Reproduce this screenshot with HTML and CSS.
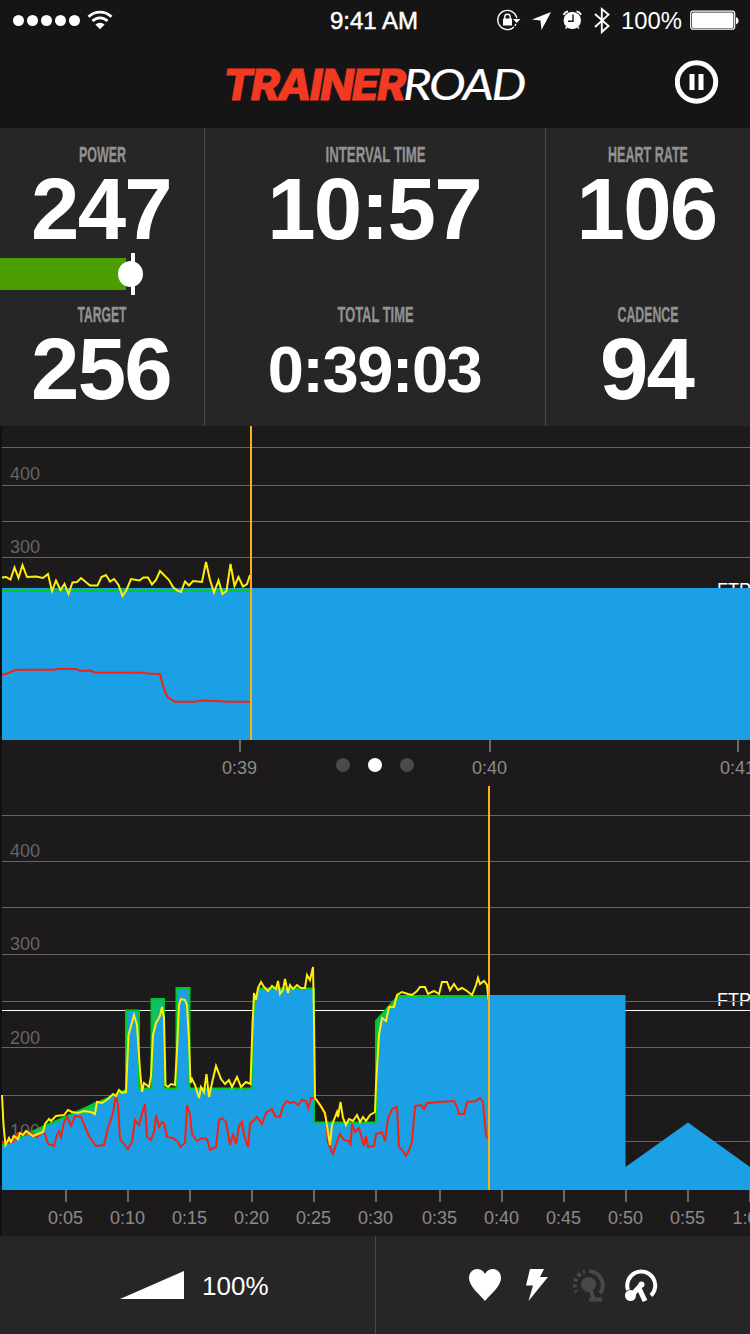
FILE: index.html
```html
<!DOCTYPE html>
<html lang="en">
<head>
    <meta charset="UTF-8">
    <meta name="viewport" content="width=device-width, initial-scale=1.0">
    <title>TrainerRoad</title>
    <link rel="stylesheet" href="styles.css">
</head>

<body>
    <div class="app">
        <header class="header">
            <div class="statusbar">
                <div class="status-left">
                    <span class="signal"></span><span class="signal"></span><span class="signal"></span><span class="signal"></span><span class="signal"></span>
                    <svg class="wifi" width="26" height="20" viewBox="0 0 26 20">
                        <path d="M1.5 6.8a16.3 16.3 0 0 1 23 0M5.5 11a10.6 10.6 0 0 1 15 0" fill="none" stroke="#fff" stroke-width="2.7"/>
                        <path d="M8.4 14.6a6.5 6.5 0 0 1 9.2 0L13 19.2z" fill="#fff"/>
                    </svg>
                </div>
                <svg class="clock" width="100" height="40" viewBox="0 0 100 40">
                    <text x="5" y="29" textLength="88" lengthAdjust="spacingAndGlyphs">9:41 AM</text>
                </svg>
                <svg class="status-icons" width="254" height="40" viewBox="496 0 254 40">
                    <!-- rotation lock -->
                    <path d="M514 27A9.6 9.6 0 1 1 516.8 18" fill="none" stroke="#fff" stroke-width="1.4"/>
                    <path d="M516 24l-1.2 2" fill="none" stroke="#fff" stroke-width="1.4"/>
                    <path d="M513 19h7.5l-3.8 4zM503 18.5h9v7h-9z" fill="#fff"/>
                    <path d="M504.8 19v-2a2.7 2.7 0 0 1 5.4 0v2" fill="none" stroke="#fff" stroke-width="1.4"/>
                    <!-- location -->
                    <path d="M551 12l-9.5 18-1-9.5-8.5-.9z" fill="#fff"/>
                    <!-- alarm -->
                    <circle cx="572.3" cy="20.4" r="8.7" fill="#fff"/>
                    <path d="M563.6 15a5.5 5.5 0 0 1 4.5-3.6M581 15a5.5 5.5 0 0 0-4.5-3.6M567 27l-1.5 1.5M577.5 27l1.5 1.5" fill="none" stroke="#fff" stroke-width="1.6"/>
                    <path d="M573 14.5v6.8h-5" fill="none" stroke="#151515" stroke-width="1.4"/>
                    <!-- bluetooth -->
                    <path d="M595 14l13.5 12-6.7 6V9l6.7 5.6L595 27" fill="none" stroke="#fff" stroke-width="1.9"/>
                    <text x="621" y="29" textLength="61" lengthAdjust="spacingAndGlyphs">100%</text>
                    <!-- battery -->
                    <rect x="690.7" y="11.2" width="44" height="18" rx="2.5" fill="none" stroke="#fff" stroke-width="1.2"/>
                    <rect x="692" y="12.5" width="41.4" height="15.4" rx="1.5" fill="#fff"/>
                    <path d="M736 17a4 4 0 0 1 0 7.5z" fill="#fff"/>
                </svg>
            </div>
            <div class="navbar">
                <svg class="logo" width="310" height="60" viewBox="220 52 310 60">
                    <text class="logo-trainer" x="223" y="99.5" textLength="181" lengthAdjust="spacingAndGlyphs">TRAINER</text>
                    <text class="logo-road" x="403" y="99.5" textLength="121" lengthAdjust="spacingAndGlyphs">ROAD</text>
                </svg>
                <svg class="pause" width="44" height="44" viewBox="0 0 44 44">
                    <circle cx="21.5" cy="22" r="19.2" fill="none" stroke="#fff" stroke-width="5"/>
                    <path d="M14.5 14h5v16h-5zM23.5 14h5v16h-5z" fill="#fff"/>
                </svg>
            </div>
        </header>

        <section class="stats">
            <div class="stat-column">
                <div class="stat">
                    <svg class="label" width="180" height="27"><text x="66" y="21" textLength="47" lengthAdjust="spacingAndGlyphs">POWER</text></svg>
                    <div class="value">247</div>
                </div>
                <div class="power-bar">
                    <div class="power-fill"></div>
                    <div class="power-mark"></div>
                    <div class="power-knob"></div>
                </div>
                <div class="stat">
                    <svg class="label" width="180" height="27"><text x="64.5" y="21" textLength="49" lengthAdjust="spacingAndGlyphs">TARGET</text></svg>
                    <div class="value">256</div>
                </div>
            </div>
            <div class="stat-column">
                <div class="stat">
                    <svg class="label" width="300" height="27"><text x="99.5" y="21" textLength="100" lengthAdjust="spacingAndGlyphs">INTERVAL TIME</text></svg>
                    <div class="value">10:57</div>
                </div>
                <div class="stat">
                    <svg class="label" width="300" height="27"><text x="111.5" y="21" textLength="76" lengthAdjust="spacingAndGlyphs">TOTAL TIME</text></svg>
                    <div class="value value-small">0:39:03</div>
                </div>
            </div>
            <div class="stat-column">
                <div class="stat">
                    <svg class="label" width="200" height="27"><text x="60" y="21" textLength="80" lengthAdjust="spacingAndGlyphs">HEART RATE</text></svg>
                    <div class="value">106</div>
                </div>
                <div class="stat">
                    <svg class="label" width="200" height="27"><text x="69.5" y="21" textLength="61" lengthAdjust="spacingAndGlyphs">CADENCE</text></svg>
                    <div class="value">94</div>
                </div>
            </div>
        </section>

        <section class="chart-zoomed">
            <svg class="chart" width="750" height="360" viewBox="0 426 750 360">
                <rect class="edge" x="0" y="426" width="2" height="360"/>
                <path class="grid" d="M2 447.5H750M2 485.5H750M2 521.5H750M2 557.5H750"/>
                <text class="watts" x="10" y="480">400</text>
                <text class="watts" x="10" y="553">300</text>
                <text class="ftp" x="717" y="596">FTP</text>
                <rect class="area" x="2" y="588" width="748" height="152"/>
                <path class="target" d="M2 590.8H250"/>
                <polyline class="power" points="2,577.5 6,577 10.5,579.5 14.5,567.5 18.5,578 22.5,565 27,577 36,576.5 43,578 48,574 52,591 56,580.5 60.5,590 64.5,584 68.5,594 72.5,582.5 77,582 81,578 90,585.5 97.5,585.5 101.5,577 106,575 110,581.5 114,579 118.5,585 122.5,596 126.5,590 131,579 139.5,580.5 143.5,577.5 148,577.5 152,584.5 156,580 160,571 169,580 173,587 177,590.5 181,592 185,581.5 189,585.5 193,581 202,582 206,562 210,580 214,592.5 218.5,580.5 222.5,594 226.5,591 230.5,564 234.5,586 238.5,577 243,586.5 247,584 250,575"/>
                <polyline class="heart" points="2,674.5 6,674 13,671 18,669.7 53,669.7 58,669 77,669 80,671 90,670.5 95,672.5 145,672.7 147,673.5 160,674 162,682 165,692 168,697.5 175,701.7 195,701.7 200,700.5 216,701 228,701.7 250,701.7"/>
                <path class="now" d="M251 426V740"/>
                <path class="tick" d="M240 740v12M490 740v12M738 740v12"/>
                <text class="time" x="239.5" y="774">0:39</text>
                <text class="time" x="489.5" y="774">0:40</text>
                <text class="time" x="737.5" y="774">0:41</text>
                <circle cx="343" cy="765" r="7" fill="#4b494a"/>
                <circle cx="375" cy="765" r="7" fill="#fff"/>
                <circle cx="407" cy="765" r="7" fill="#4b494a"/>
            </svg>
        </section>

        <section class="chart-full">
            <svg class="chart" width="750" height="450" viewBox="0 786 750 450">
                <rect class="edge" x="0" y="786" width="2" height="450"/>
                <path class="grid" d="M2 815.5H750M2 861.5H750M2 907.5H750M2 954.5H750M2 1001.5H750M2 1047.5H750M2 1095.5H750M2 1141.5H750"/>
                <text class="watts" x="10" y="857">400</text>
                <text class="watts" x="10" y="950">300</text>
                <text class="watts" x="10" y="1044">200</text>
                <text class="watts" x="10" y="1137">100</text>
                <text class="ftp" x="717" y="1006">FTP</text>
                <path class="grid" d="M700 1001.5H750"/>
                <path class="ftp-line" d="M2 1010.5H750"/>
                <path class="area" d="M2 1190V1145L126 1090V1010H139.5V1089H151V998.5H164.5V1089H176V987.5H190V1089H251.5L252.5 1020L255 1000L259 988H314V1123H376V1021L398 996L489 995H625.5V1167L688 1122.5L750 1167V1190z"/>
                <!-- gap between target and actual power -->
                <path class="gap" d="M28 1135L45 1127V1131L43 1134zM78 1111L97 1101L95 1113H80zM377 1021L398 996H402L389 1011L381 1022L377 1060zM152 1000H163L162 1010L155 1025L152 1080z"/>
                <path class="target" d="M2 1145L126 1090V1010.5H139V1088.5H151.5V999H164V1088.5H176.5V988H189.5V1088.5H251.5L252.5 1020L255 1000L259 988.5H314V1122.5H376V1021L398 996H488"/>
                <polyline class="heart" points="2,1143 12,1143 18,1133 24,1135 30,1132 37,1137 42,1132 45,1134 48,1144 54,1146 57,1135 59,1131 61,1137 64,1122 67,1117 71,1126 75,1116 81,1117 85,1127 90,1138 96,1146 104,1145 108,1128 113,1113 116,1095 118,1105 120,1139 124,1144 128,1149 132,1142 135,1120 139,1125 143,1110 145,1104 147,1137 151,1140 154,1132 156,1115 159,1127 162,1122 164,1123 167,1137 173,1138 178,1142 180,1147 185,1143 187,1105 190,1114 192,1134 197,1141 202,1138 207,1139 210,1150 216,1147 219,1120 222,1118 226,1122 230,1145 233,1135 236,1144 239,1126 242,1122 244,1135 248,1147 250,1124 257,1117 262,1124 266,1113 272,1109 275,1116 280,1117 283,1106 287,1101 290,1103 294,1102 298,1105 302,1100 306,1101 308.5,1108 311,1098 315,1098 322,1107 326,1118 328,1143 333,1154 337,1141 340,1134 344,1140 349,1141 350.5,1146 352,1124 355,1132 359,1128 364,1146 366,1136 368,1147 374,1146 376,1134 382,1132 385,1141 388,1119 392,1109 397,1107 399,1147 403,1151 406,1156 409,1150 412,1142 415,1106 421,1105 424,1109 427,1103 440,1102 454,1101 457,1107 459,1114 464,1114 467,1102 476,1101 480,1098 483,1102 486,1136 487,1138"/>
                <polyline class="power" points="2,1095 3.5,1125 5.5,1145 9,1138 11,1142 14,1136 18,1139 20,1133 23,1135 26,1131 33,1136 38,1134 43,1132 45,1124 49,1119 51,1121 56,1116 64,1115 68,1110 72,1112 78,1113 84,1111 91,1112 95,1114 97,1102 102,1103 108,1099 113,1094 116,1096 119,1090 122,1093 126,1092 128.5,1035 131,1026 134,1015 137,1025 140,1070 142,1092 144,1083 149,1087 151,1076 153,1035 156,1023 160,1016 162,1007 164,1018 165.5,1085 168,1087 171,1084 175,1085 177,1050 179,1005 181,999 185,1000 187,1005 189,1040 190.5,1083 192,1079 195,1085 199,1098 201,1087 204,1092 206.5,1074 209,1097 212,1083 216,1066 221,1079 225,1084 229,1080 232,1087 237,1077 241,1087 246,1082 250.5,1084 252,1040 254,993 256,1000 258,988 261,982 264,987 268,991 272,986 276,989 278,981 280,994 283,990 285,979 288,993 290,985 293,989 297,985 301,988 305,988 307,975 310,980 313,967 314,1020 315,1098 320,1105 325,1113 330,1145 332,1125 337,1112 338,1117 340.5,1102 343,1118 346,1125 349,1119 353,1121 357,1115 360,1122 363,1117 366,1121 370,1115 375,1112 376,1085 379,1035 382,1018 386,1021 389,1007 394,1007 397,995 402,992 408,994 412,995 417,991 420,987 425,987 428,994 434,991 439,994 442,982 447,982 450,990 454,984 458,990 462,988 467,991 472,995 476,985 478,978 480,984 484,981 487,985 488.5,1000"/>
                <path class="now" d="M489 786V1190"/>
                <path class="tick" d="M66 1190v12M128 1190v12M190 1190v12M252 1190v12M314 1190v12M376 1190v12M440 1190v12M502 1190v12M564 1190v12M626 1190v12M688 1190v12M750 1190v12"/>
                <text class="time" x="65.5" y="1224">0:05</text>
                <text class="time" x="127.5" y="1224">0:10</text>
                <text class="time" x="189.5" y="1224">0:15</text>
                <text class="time" x="251.5" y="1224">0:20</text>
                <text class="time" x="313.5" y="1224">0:25</text>
                <text class="time" x="375.5" y="1224">0:30</text>
                <text class="time" x="439.5" y="1224">0:35</text>
                <text class="time" x="501.5" y="1224">0:40</text>
                <text class="time" x="563.5" y="1224">0:45</text>
                <text class="time" x="625.5" y="1224">0:50</text>
                <text class="time" x="687.5" y="1224">0:55</text>
                <text class="time" x="750" y="1224">1:00</text>
            </svg>
        </section>

        <footer class="footer">
            <div class="intensity">
                <svg width="64" height="28" viewBox="0 0 64 28"><path d="M0 28L64 0V28z" fill="#fff"/></svg>
                <span>100%</span>
            </div>
            <div class="sensors">
                <svg width="34" height="34" viewBox="0 0 34 34">
                    <path d="M17 33C11 26 1 18 1 10C1 0 13-2 17 6C21-2 33 0 33 10C33 18 23 26 17 33z" fill="#fff"/>
                </svg>
                <svg width="24" height="34" viewBox="-1 0 24 34">
                    <path d="M5 1H19L15 9H23L3.5 33L8 17.5H1z" fill="#fff"/>
                </svg>
                <svg width="36" height="34" viewBox="-2 0 36 34">
                    <path d="M17 3.2A14 14 0 0 1 28 25.5" fill="none" stroke="#484848" stroke-width="4"/>
                    <path d="M4.5 24A14 14 0 0 1 16 3.2" fill="none" stroke="#484848" stroke-width="4" stroke-dasharray="2 3 3 2.5 3.5 2.5 4 2.5"/>
                    <circle cx="16.5" cy="16.5" r="7.5" fill="#484848"/>
                    <path d="M17 18L22 31M17 31.5H30" fill="none" stroke="#484848" stroke-width="4"/>
                </svg>
                <svg class="cadence-icon" width="34" height="34" viewBox="0 0 34 34">
                    <path d="M4 22A14 14 0 1 1 27 27.5" fill="none" stroke="#fff" stroke-width="4"/>
                    <circle cx="6.5" cy="27.5" r="5.5" fill="#fff"/>
                    <circle cx="17.5" cy="16.5" r="3" fill="#fff"/>
                    <path d="M8 27L17.5 16.5M15 20L21 33" fill="none" stroke="#fff" stroke-width="5"/>
                </svg>
            </div>
        </footer>
    </div>
</body>
</html>
```

FILE: styles.css
```css
body {
    margin: 0;
    background: #151515;
    font-family: "Liberation Sans", Arial, sans-serif;
    color: #fff;
}
svg {
    display: block;
    flex: none;
}
.app {
    width: 750px;
    height: 1334px;
    overflow: hidden;
    display: flex;
    flex-direction: column;
}

/* header */
.header {
    height: 128px;
    background: #151515;
}
.statusbar {
    height: 40px;
    display: grid;
    grid-template-columns: 325px 171px 254px;
    font-size: 24px;
}
.statusbar text {
    fill: #fff;
}
.status-left {
    display: flex;
    align-items: center;
    gap: 3px;
    padding-left: 13px;
}
.signal {
    width: 11px;
    height: 11px;
    border-radius: 50%;
    background: #fff;
}
.wifi {
    margin-left: 4px;
}
.clock text {
    stroke: #fff;
    stroke-width: 0.5px;
}
.navbar {
    height: 88px;
    display: grid;
    grid-template-columns: 220px 310px 1fr;
    padding-top: 12px;
    box-sizing: border-box;
}
.logo {
    grid-column: 2;
}
.logo-trainer {
    font: italic 800 43px Inter, sans-serif;
    letter-spacing: -2px;
    fill: #f23a22;
    stroke: #f23a22;
    stroke-width: 0.8px;
}
.logo-road {
    font: italic 400 43px Lato, sans-serif;
    letter-spacing: -2px;
    fill: #fff;
    stroke: #fff;
    stroke-width: 0.2px;
}
.pause {
    justify-self: end;
    margin: 8px 31px 0 0;
}

/* stats */
.stats {
    height: 298px;
    display: grid;
    grid-template-columns: 205px 341px 204px;
    background: #262626;
}
.stat-column {
    display: flex;
    flex-direction: column;
    justify-content: space-between;
    box-sizing: border-box;
    padding: 13px 0;
}
.stat-column + .stat-column {
    border-left: 1px solid #4a4a4a;
    margin-left: -1px;
}
.stat {
    height: 112px;
    display: flex;
    flex-direction: column;
    align-items: center;
}
.label {
    font-size: 22px;
    font-weight: bold;
    font-family: "Liberation Sans Narrow", "Liberation Sans", sans-serif;
}
.label text {
    fill: #929292;
    stroke: #929292;
    stroke-width: 0.3px;
}
.value {
    font-size: 87px;
    font-weight: bold;
    line-height: 82px;
    letter-spacing: -1.8px;
    padding-right: 3px;
}
.value-small {
    font-size: 65px;
    line-height: 83px;
    letter-spacing: -1.5px;
    padding-right: 2px;
}
.power-bar {
    position: relative;
    height: 42px;
    margin-top: -6px;
}
.power-fill {
    width: 126px;
    height: 32px;
    margin-top: 5px;
    background: #4a9e00;
}
.power-mark {
    position: absolute;
    left: 131px;
    top: 0;
    width: 4px;
    height: 42px;
    background: #fff;
}
.power-knob {
    position: absolute;
    left: 118px;
    top: 8px;
    width: 25px;
    height: 26px;
    border-radius: 50%;
    background: #fff;
}

/* charts */
.chart {
    background: #1c1a1b;
    font-size: 18px;
}
.edge {
    fill: #111;
}
.grid {
    stroke: #666465;
}
.watts {
    fill: #666465;
}
.time {
    fill: #8c8a8b;
    text-anchor: middle;
}
.ftp {
    fill: #fff;
}
.ftp-line {
    stroke: #fff;
}
.area {
    fill: #1b9fe5;
}
.gap {
    fill: #14bd6c;
}
.target, .power, .heart {
    fill: none;
    stroke-width: 2px;
}
.target {
    stroke: #00c81e;
}
.power {
    stroke: #ffee0a;
}
.heart {
    stroke: #fa2010;
}
.now {
    stroke: #fbae17;
    stroke-width: 2px;
}
.tick {
    stroke: #6b696a;
    stroke-width: 2px;
}

/* footer */
.footer {
    height: 98px;
    display: grid;
    grid-template-columns: 375px 375px;
    background: #262626;
}
.intensity {
    display: flex;
    align-items: center;
    gap: 18px;
    padding-left: 120px;
    font-size: 26px;
}
.intensity span {
    padding-top: 3px;
}
.sensors {
    display: flex;
    align-items: center;
    padding-left: 92px;
    gap: 22px;
    border-left: 1px solid #4a4a4a;
}
.cadence-icon {
    margin-left: -4px;
}
```
